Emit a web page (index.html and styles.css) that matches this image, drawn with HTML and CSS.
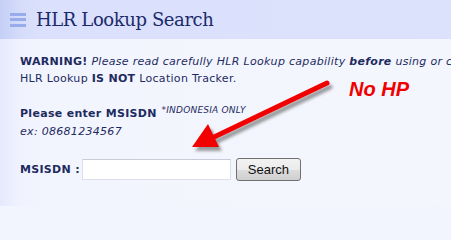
FILE: index.html
```html
<!DOCTYPE html>
<html>
<head>
<meta charset="utf-8">
<link rel="stylesheet" href="styles.css">
</head>
<body>
<div class="page">
  <header class="header">
    <span class="menu-icon"><i></i><i></i><i></i></span>
    <h1 class="title">HLR Lookup Search</h1>
  </header>
  <main class="content">
    <p class="warning"><b>WARNING!</b> <em>Please read carefully HLR Lookup capability <b>before</b> using or co</em><br>HLR Lookup <b>IS NOT</b> Location Tracker.</p>
    <p class="prompt"><b>Please enter MSISDN</b> <sup class="note">*INDONESIA ONLY</sup><br><em>ex: 08681234567</em></p>
    <form class="form-row">
      <label class="label" for="msisdn">MSISDN :</label>
      <input class="input" id="msisdn" type="text">
      <button class="btn" type="button">Search</button>
    </form>
  </main>
  <div class="annotation">No HP</div>
  <svg class="arrow" width="451" height="206" viewBox="0 0 451 206">
    <defs>
      <filter id="sh" x="-20%" y="-20%" width="140%" height="140%">
        <feGaussianBlur stdDeviation="1.6"/>
      </filter>
    </defs>
    <g opacity="0.55" filter="url(#sh)" transform="translate(3,4)">
      <line x1="327" y1="83" x2="214" y2="137" stroke="#505050" stroke-width="5" stroke-linecap="round"/>
      <polygon points="192,147 208,124 219,147" fill="#505050"/>
    </g>
    <line x1="327" y1="83" x2="212" y2="138" stroke="#f20000" stroke-width="5" stroke-linecap="round"/>
    <polygon points="192,147 208,124 219,147" fill="#f20000"/>
  </svg>
</div>
</body>
</html>
```
FILE: styles.css
```css
html, body {
  margin: 0;
  padding: 0;
  background: #f3f5fe;
}
body {
  width: 451px;
  height: 206px;
  overflow: hidden;
}
.page {
  position: relative;
  width: 451px;
  height: 206px;
  overflow: hidden;
  background: linear-gradient(to right, #e4e9fc 0px, #f0f3fe 20px, #f3f5fe 60px, #f4f6fe 100%);
  font-family: "DejaVu Sans", Verdana, sans-serif;
  color: #1d2b5e;
}
.header {
  height: 39px;
  display: flex;
  align-items: center;
  background: linear-gradient(to right, #c5cff7 0px, #d5dcfa 20px, #dbe1fc 40px, #dce2fc 100%);
}
.menu-icon {
  display: flex;
  flex-direction: column;
  gap: 2.5px;
  width: 16px;
  margin-left: 10px;
  margin-right: 10px;
}
.menu-icon i {
  display: block;
  height: 3px;
  background: #98acec;
}
.title {
  margin: 0;
  font-family: "DejaVu Serif", Georgia, serif;
  font-weight: normal;
  font-size: 18px;
  letter-spacing: -0.4px;
  color: #1b2a6b;
  line-height: 1;
  padding-top: 1px;
}
.content {
  padding: 14px 0 0 20px;
  font-size: 11px;
  line-height: 17px;
  letter-spacing: 0.3px;
  overflow: hidden;
}
.content p {
  margin: 0;
}
.warning {
  white-space: nowrap;
}
.prompt {
  margin-top: 18px !important;
  line-height: 18px;
}
.note {
  font-size: 9px;
  font-style: italic;
  vertical-align: 4px;
  line-height: 0;
  margin-left: 1px;
  letter-spacing: 0.2px;
}
.form-row {
  display: flex;
  align-items: center;
  margin-top: 17px;
}
.label {
  font-weight: bold;
  margin-right: 2px;
}
.input {
  width: 149px;
  height: 21px;
  box-sizing: border-box;
  border: 1px solid #dcdfe8;
  border-top-color: #c8ccd8;
  background: #ffffff;
  margin: 0;
  padding: 0 3px;
}
.btn {
  margin-left: 5px;
  width: 65px;
  height: 23px;
  box-sizing: border-box;
  border: 1px solid #707070;
  border-radius: 3px;
  background: linear-gradient(#f2f2f2, #ebebeb 50%, #dddddd 51%, #cfcfcf);
  font-family: "Liberation Sans", Arial, sans-serif;
  font-size: 13px;
  letter-spacing: 0;
  color: #111;
  padding: 0;
}
.annotation {
  position: absolute;
  left: 349px;
  top: 78px;
  font-family: "Liberation Sans", Arial, sans-serif;
  font-weight: bold;
  font-style: italic;
  font-size: 20px;
  color: #f00000;
  line-height: 22px;
}
.arrow {
  position: absolute;
  left: 0;
  top: 0;
  pointer-events: none;
}
```
